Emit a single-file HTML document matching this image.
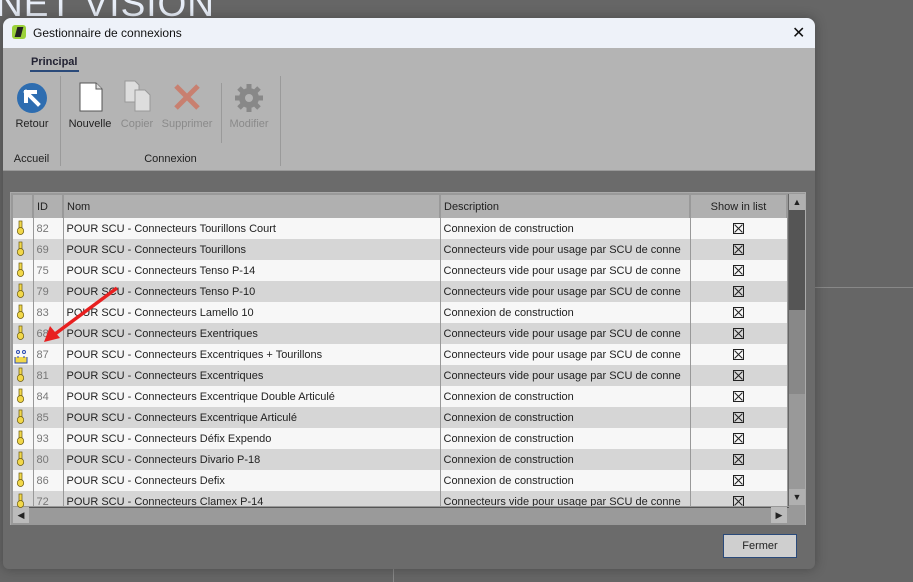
<!DOCTYPE html>
<html><head><meta charset="utf-8"><style>
*{box-sizing:border-box;margin:0;padding:0}
body{width:913px;height:582px;background:#666;position:relative;overflow:hidden;font-family:"Liberation Sans",sans-serif;font-size:11px;color:#222}
.abs{position:absolute}
.bg-title{left:-4px;top:-17px;font-size:37px;color:#e8eef8;letter-spacing:1px}
.dlg{left:3px;top:18px;width:812px;height:551px;background:#6b6b6b;border-radius:8px 8px 6px 6px;overflow:hidden;box-shadow:0 0 12px rgba(0,0,0,.3)}
.tb{left:0;top:0;width:812px;height:30px;background:#eef2f9}
.rib{left:0;top:30px;width:812px;height:123px;background:#b4b4b4;border-bottom:1px solid #999}
.lbl{font-size:11px;color:#222;text-align:center}
.dis{color:#8a8a8a}
.sep{width:1px;background:#9a9a9a}
.grid{left:10px;top:192px;width:796px;height:333px;background:#999;border:1px solid #aaa}
table{border-collapse:collapse;position:absolute;left:2px;top:2px;table-layout:fixed}
td,th{height:21px;white-space:nowrap;overflow:hidden;padding:0 3px;font-weight:normal;text-align:left;font-size:11px}
th{background:#b0b0b0;border-right:2px solid #999;height:23px}
tr:nth-child(odd) td{background:#f7f7f7}
tr:nth-child(even) td{background:#d6d6d6}
td{border-right:1px solid #999}
td.id{color:#777}
.cb{display:inline-block;width:11px;height:11px;border:1px solid #222;position:relative;vertical-align:middle}
.cb:before,.cb:after{content:"";position:absolute;left:-1px;top:4px;width:11px;height:1px;background:#222;transform:rotate(45deg)}
.cb:after{transform:rotate(-45deg)}
</style></head><body>
<div class="abs bg-title">NET VISION</div>
<div class="abs" style="left:815px;top:287px;width:98px;height:1px;background:#888"></div>
<div class="abs" style="left:393px;top:569px;width:1px;height:13px;background:#888"></div>
<div class="dlg abs">
 <div class="tb abs">
  <div class="abs" style="left:9px;top:7px;width:14px;height:14px;background:#9bd13a;border-radius:3px"><div style="position:absolute;left:4px;top:2px;width:6px;height:10px;background:#222;transform:skewX(-15deg)"></div></div>
  <div class="abs" style="left:30px;top:8px;font-size:12px;color:#111">Gestionnaire de connexions</div>
  <div class="abs" style="left:789px;top:5px;font-size:16px;color:#111">✕</div>
 </div>
 <div class="rib abs">
  <div class="abs" style="left:28px;top:8px;font-weight:bold;color:#223">Principal</div>
  <div class="abs" style="left:27px;top:22px;width:49px;height:2px;background:#2a4a7a"></div>
  <svg class="abs" style="left:14px;top:35px" width="30" height="30"><circle cx="15" cy="15" r="15" fill="#2e6db0"/><path d="M9 9 L21 21 M9 9 L9 18 M9 9 L18 9" stroke="#fff" stroke-width="4" fill="none" stroke-linecap="square"/></svg>
  <div class="abs lbl" style="left:8px;top:70px;width:42px">Retour</div>
  <div class="abs sep" style="left:57px;top:28px;height:90px"></div>
  <svg class="abs" style="left:76px;top:34px" width="24" height="30"><path d="M1 1 H17 L23 7 V29 H1 Z" fill="#fff" stroke="#555"/><path d="M17 1 V7 H23" fill="#ddd" stroke="#555"/></svg>
  <div class="abs lbl" style="left:62px;top:70px;width:50px">Nouvelle</div>
  <svg class="abs" style="left:120px;top:32px" width="30" height="32"><path d="M2 1 H12 L16 5 V22 H2 Z" fill="#ddd" stroke="#999"/><path d="M12 10 H22 L27 15 V31 H12 Z" fill="#ddd" stroke="#999"/></svg>
  <div class="abs lbl dis" style="left:114px;top:70px;width:40px">Copier</div>
  <svg class="abs" style="left:170px;top:35px" width="28" height="28"><path d="M3 3 L25 25 M25 3 L3 25" stroke="#c88070" stroke-width="5"/></svg>
  <div class="abs lbl dis" style="left:155px;top:70px;width:58px">Supprimer</div>
  <div class="abs sep" style="left:218px;top:35px;height:60px"></div>
  <svg class="abs" style="left:230px;top:34px" width="32" height="32"><g fill="#888"><circle cx="16" cy="16" r="10"/><g stroke="#888" stroke-width="5"><path d="M16 2 V30 M2 16 H30 M6 6 L26 26 M26 6 L6 26"/></g></g><circle cx="16" cy="16" r="4" fill="#b4b4b4"/></svg>
  <div class="abs lbl dis" style="left:222px;top:70px;width:48px">Modifier</div>
  <div class="abs sep" style="left:277px;top:28px;height:90px"></div>
  <div class="abs lbl" style="left:0;top:105px;width:57px">Accueil</div>
  <div class="abs lbl" style="left:58px;top:105px;width:219px">Connexion</div>
 </div>
</div>
<div class="grid abs">
<table>
<colgroup><col style="width:20px"><col style="width:30px"><col style="width:377px"><col style="width:250px"><col style="width:97px"></colgroup>
<tr><th></th><th>ID</th><th>Nom</th><th>Description</th><th style="text-align:center">Show in list</th></tr>
</table>
<table style="top:25px">
<colgroup><col style="width:20px"><col style="width:30px"><col style="width:377px"><col style="width:250px"><col style="width:97px"></colgroup>
<tr><td></td><td class="id">82</td><td>POUR SCU - Connecteurs Tourillons Court</td><td>Connexion de construction</td><td style="text-align:center"><span class="cb"></span></td></tr>
<tr><td></td><td class="id">69</td><td>POUR SCU - Connecteurs Tourillons</td><td>Connecteurs vide pour usage par SCU de conne</td><td style="text-align:center"><span class="cb"></span></td></tr>
<tr><td></td><td class="id">75</td><td>POUR SCU - Connecteurs Tenso P-14</td><td>Connecteurs vide pour usage par SCU de conne</td><td style="text-align:center"><span class="cb"></span></td></tr>
<tr><td></td><td class="id">79</td><td>POUR SCU - Connecteurs Tenso P-10</td><td>Connecteurs vide pour usage par SCU de conne</td><td style="text-align:center"><span class="cb"></span></td></tr>
<tr><td></td><td class="id">83</td><td>POUR SCU - Connecteurs Lamello 10</td><td>Connexion de construction</td><td style="text-align:center"><span class="cb"></span></td></tr>
<tr><td></td><td class="id">68</td><td>POUR SCU - Connecteurs Exentriques</td><td>Connecteurs vide pour usage par SCU de conne</td><td style="text-align:center"><span class="cb"></span></td></tr>
<tr><td></td><td class="id">87</td><td>POUR SCU - Connecteurs Excentriques + Tourillons</td><td>Connecteurs vide pour usage par SCU de conne</td><td style="text-align:center"><span class="cb"></span></td></tr>
<tr><td></td><td class="id">81</td><td>POUR SCU - Connecteurs Excentriques</td><td>Connecteurs vide pour usage par SCU de conne</td><td style="text-align:center"><span class="cb"></span></td></tr>
<tr><td></td><td class="id">84</td><td>POUR SCU - Connecteurs Excentrique Double Articulé</td><td>Connexion de construction</td><td style="text-align:center"><span class="cb"></span></td></tr>
<tr><td></td><td class="id">85</td><td>POUR SCU - Connecteurs Excentrique Articulé</td><td>Connexion de construction</td><td style="text-align:center"><span class="cb"></span></td></tr>
<tr><td></td><td class="id">93</td><td>POUR SCU - Connecteurs Défix Expendo</td><td>Connexion de construction</td><td style="text-align:center"><span class="cb"></span></td></tr>
<tr><td></td><td class="id">80</td><td>POUR SCU - Connecteurs Divario P-18</td><td>Connexion de construction</td><td style="text-align:center"><span class="cb"></span></td></tr>
<tr><td></td><td class="id">86</td><td>POUR SCU - Connecteurs Defix</td><td>Connexion de construction</td><td style="text-align:center"><span class="cb"></span></td></tr>
<tr><td></td><td class="id">72</td><td>POUR SCU - Connecteurs Clamex P-14</td><td>Connecteurs vide pour usage par SCU de conne</td><td style="text-align:center"><span class="cb"></span></td></tr>
</table>
<div class="abs" style="left:0;top:313px;width:794px;height:19px;background:#999"></div>
<div class="abs" style="left:2px;top:314px;width:776px;height:16px;background:#9a9a9a;border-top:1px solid #555"></div>
<div class="abs" style="left:2px;top:314px;width:16px;height:16px;background:#bbb;font-size:9px;text-align:center;line-height:16px">◀</div>
<div class="abs" style="left:760px;top:314px;width:16px;height:16px;background:#bbb;font-size:9px;text-align:center;line-height:16px">▶</div>
<div class="abs" style="left:777px;top:1px;width:17px;height:312px;background:#999;border-left:1px solid #666"></div>
<div class="abs" style="left:778px;top:1px;width:16px;height:16px;background:#b0b0b0;font-size:9px;text-align:center;line-height:16px">▲</div>
<div class="abs" style="left:778px;top:17px;width:16px;height:100px;background:#555"></div>
<div class="abs" style="left:778px;top:117px;width:16px;height:84px;background:#888"></div>
<div class="abs" style="left:778px;top:296px;width:16px;height:16px;background:#b0b0b0;font-size:9px;text-align:center;line-height:16px">▼</div>
</div>
<div class="abs" style="left:723px;top:534px;width:74px;height:24px;background:#cfcfcf;border:1px solid #2a4a7a;text-align:center;line-height:22px;font-size:11px">Fermer</div>
<svg class="abs" style="left:0;top:0" width="913" height="582">
<line x1="117" y1="288" x2="55" y2="334" stroke="#e82020" stroke-width="3.5"/>
<path d="M44 342 L50 326 L60 338 Z" fill="#e82020"/>
</svg>
<svg class="abs" style="left:14px;top:219px" width="14" height="290">
<g fill="#f2d84a" stroke="#6a5a10" stroke-width="0.7">
<g id="k"><rect x="5" y="2" width="3" height="8"/><ellipse cx="6.5" cy="12" rx="3.2" ry="3.5"/></g>
<use href="#k" y="21"/><use href="#k" y="42"/><use href="#k" y="63"/><use href="#k" y="84"/><use href="#k" y="105"/>
<use href="#k" y="147"/><use href="#k" y="168"/><use href="#k" y="189"/><use href="#k" y="210"/><use href="#k" y="231"/><use href="#k" y="252"/><use href="#k" y="273"/>
</g>
<path d="M1 138 V144 H13 V138 M3 138 h2 M9 138 h2" stroke="#2a4ab0" fill="#f2d84a" stroke-width="1"/>
<circle cx="4" cy="133" r="1.5" fill="none" stroke="#2a4ab0"/><circle cx="10" cy="133" r="1.5" fill="none" stroke="#2a4ab0"/>
</svg>
</body></html>
